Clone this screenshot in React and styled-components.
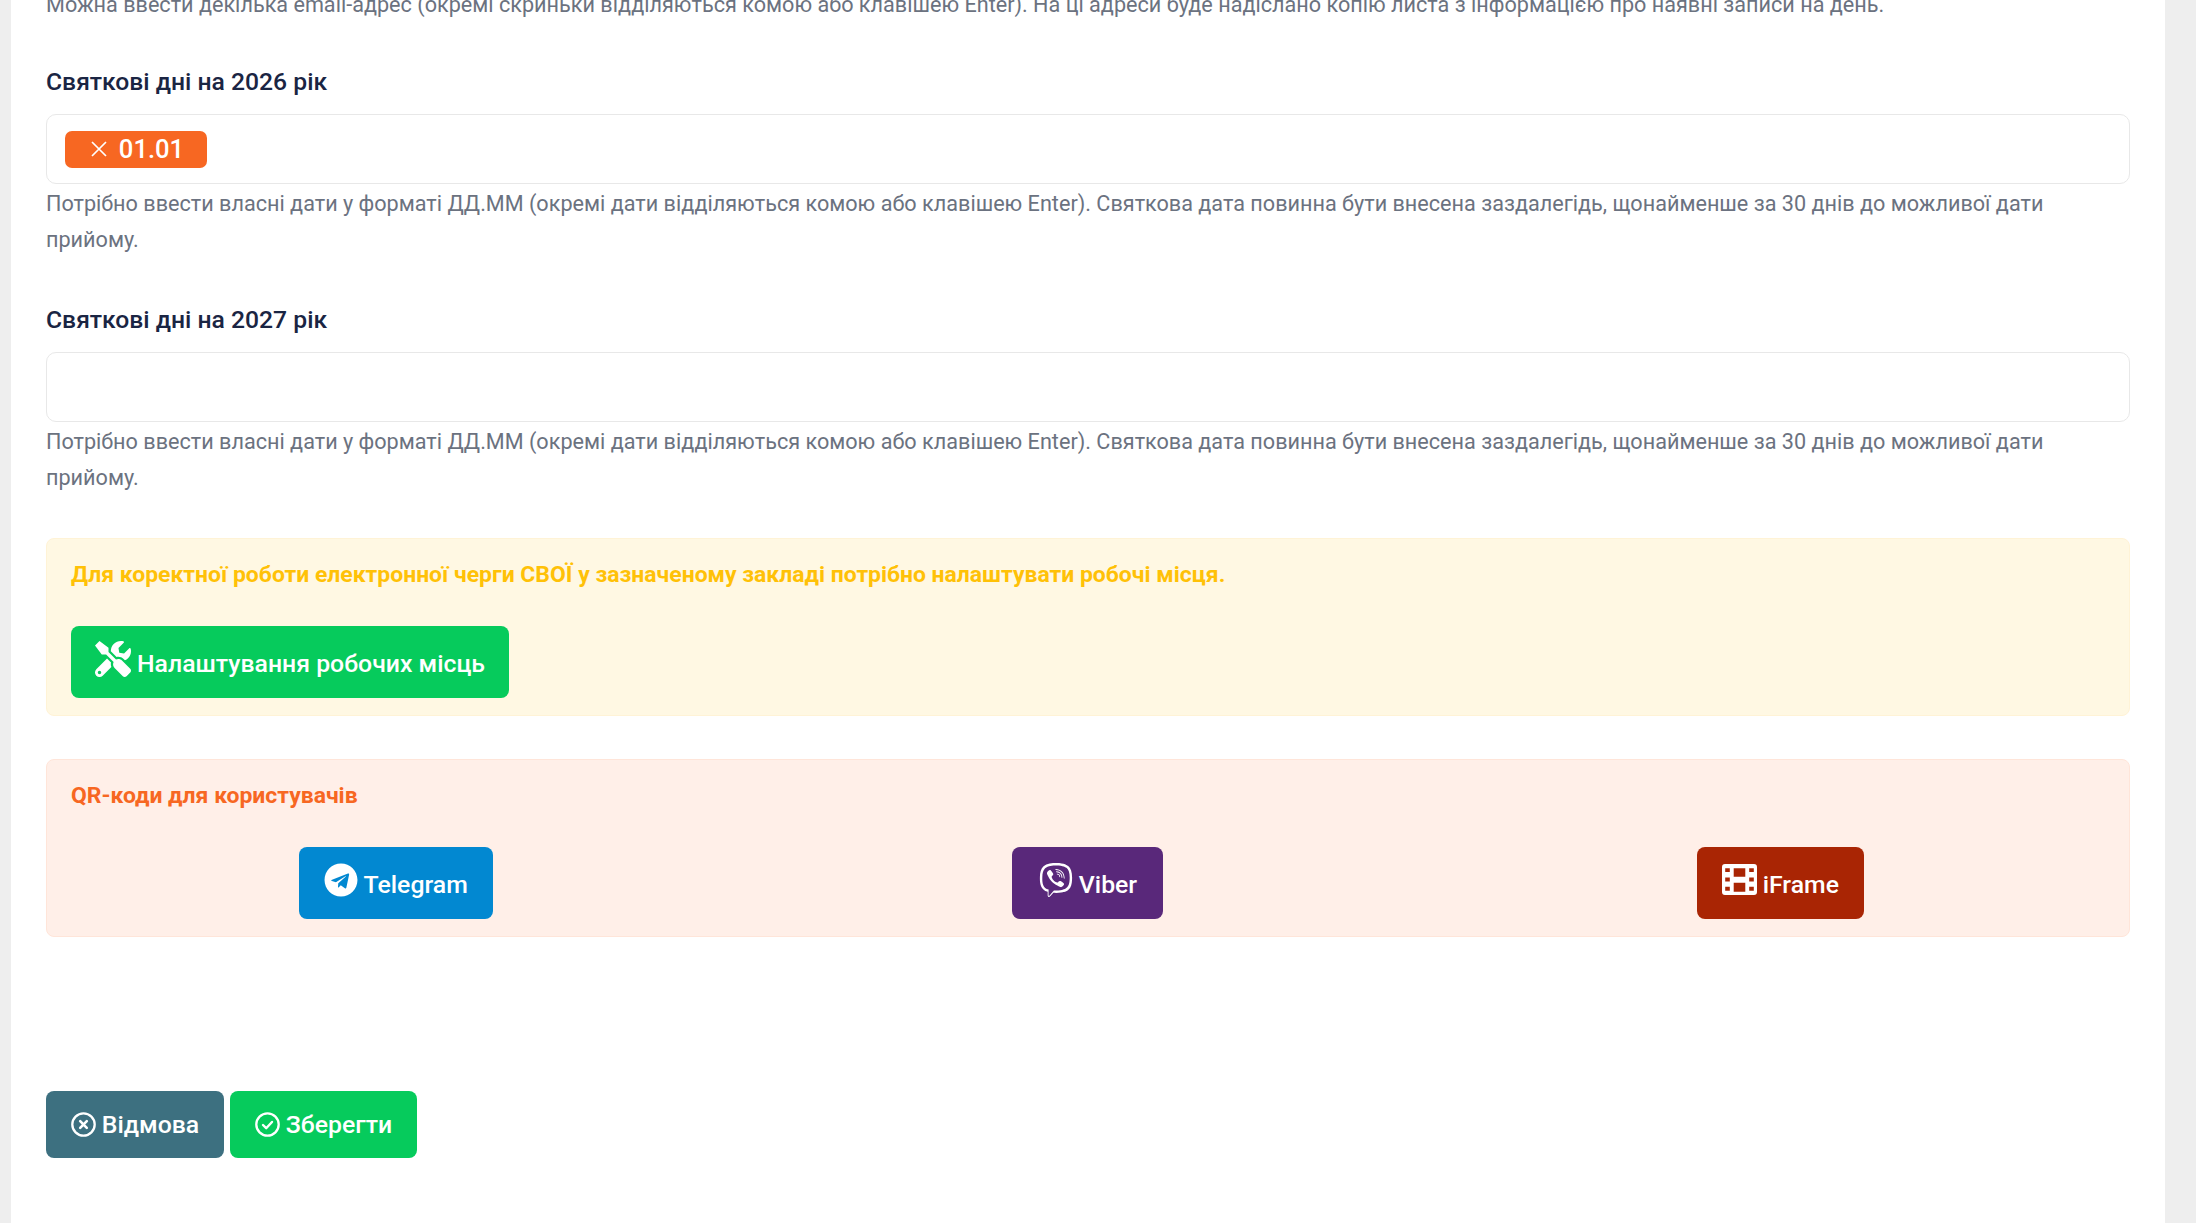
import React from "react";
import styled, { createGlobalStyle } from "styled-components";
import { FaTools, FaTelegram, FaViber } from "react-icons/fa";

const Global = createGlobalStyle`
  html, body { margin: 0; padding: 0; height: 1223px; overflow: hidden; background: #eeeeee; }
  body { font-family: Roboto, "Liberation Sans", sans-serif; }
  * { box-sizing: border-box; }
`;

const Panel = styled.main`
  margin: -13px 0 0 11px;
  width: 2154px;
  height: 1236px;
  background: #fff;
  padding: 0 35px;
  overflow: hidden;
`;

const Help = styled.p`
  margin: 0;
  font-size: 21.63px;
  line-height: 36.5px;
  color: #6b7280;
`;

const FieldHelp = styled(Help)`
  margin-top: 2px;
`;

const Field = styled.section`
  margin-top: ${(p) => p.$top}px;
`;

const Label = styled.h3`
  margin: 0 0 16px;
  font-size: 24.7px;
  line-height: 32px;
  font-weight: 500;
  color: #1a2543;
`;

const TagInput = styled.div`
  height: 70px;
  border: 1.5px solid #e8e8e8;
  border-radius: 10px;
  background: #fff;
  padding: 16px 18px;
  display: flex;
  align-items: flex-start;
`;

const Tag = styled.span`
  width: 142px;
  height: 37px;
  border-radius: 7px;
  background: #f76722;
  color: #fff;
  font-size: 25.6px;
  font-weight: 500;
  display: flex;
  align-items: center;
  justify-content: center;
  gap: 12px;
  padding-left: 3px;
`;

const Alert = styled.section`
  margin-top: ${(p) => p.$top}px;
  height: 178px;
  border-radius: 8px;
  padding: 21px 24px 0;
  border: 1.5px solid ${(p) => p.$border};
  background: ${(p) => p.$bg};
`;

const AlertTitle = styled.h4`
  margin: 0 0 ${(p) => p.$gap}px;
  font-size: 22.95px;
  line-height: 30px;
  font-weight: 700;
  color: ${(p) => p.$color};
`;

const Button = styled.button`
  height: ${(p) => p.$h || 72}px;
  width: ${(p) => p.$w}px;
  border: 0;
  border-radius: 8px;
  background: ${(p) => p.$bg};
  color: #fff;
  font-family: inherit;
  font-size: ${(p) => p.$fs || 24.8}px;
  font-weight: 500;
  display: inline-flex;
  align-items: center;
  justify-content: center;
  gap: ${(p) => p.$gap || 6}px;
  padding: 0;
  svg { display: block; flex: none; }
`;

const ButtonText = styled.span`
  display: block;
  padding-top: 3px;
`;

const QrRow = styled.div`
  margin: 0 -21.5px;
  display: grid;
  grid-template-columns: repeat(3, 1fr);
  justify-items: center;
`;

const Actions = styled.div`
  margin-top: 154px;
  display: flex;
  gap: 6px;
`;

const RaisedIcon = styled.span`
  display: block;
  line-height: 0;
  margin-top: -6px;
`;

const hint =
  "Потрібно ввести власні дати у форматі ДД.ММ (окремі дати відділяються комою або клавішею Enter). Святкова дата повинна бути внесена заздалегідь, щонайменше за 30 днів до можливої дати прийому.";

const CircleIcon = ({ children }) => (
  <svg width="25" height="25" viewBox="0 0 25 25" fill="none" stroke="#fff" strokeLinecap="round" strokeLinejoin="round">
    <circle cx="12.5" cy="12.5" r="11.2" strokeWidth="2.3" />
    {children}
  </svg>
);

const FilmIcon = () => (
  <svg width="35" height="31" viewBox="0 0 35 31" fill="#fff">
    <path
      fillRule="evenodd"
      d="M3 0h29a3 3 0 0 1 3 3v25a3 3 0 0 1-3 3H3a3 3 0 0 1-3-3V3a3 3 0 0 1 3-3zM3.2 4.2v3.8h4.6V4.2zM3.2 13.4v4h4.6v-4zM3.2 22.8v4h4.6v-4zM27.2 4.2v3.8h4.6V4.2zM27.2 13.4v4h4.6v-4zM27.2 22.8v4h4.6v-4zM11.7 4.3v8.4h11.6V4.3zM11.7 18.7v9h11.6v-9z"
    />
  </svg>
);

export default function App() {
  return (
    <Panel>
      <Global />
      <Help>
        Можна ввести декілька email-адрес (окремі скриньки відділяються комою або клавішею Enter). На ці адреси буде надіслано копію листа з інформацією про наявні записи на день.
      </Help>
      <Field $top={42}>
        <Label>Святкові дні на 2026 рік</Label>
        <TagInput>
          <Tag>
            <svg width="16" height="16" viewBox="0 0 16 16" fill="none" stroke="#fff" strokeWidth="1.7"><path d="M1 1l14 14M15 1L1 15" /></svg>
            01.01
          </Tag>
        </TagInput>
        <FieldHelp>{hint}</FieldHelp>
      </Field>
      <Field $top={45}>
        <Label>Святкові дні на 2027 рік</Label>
        <TagInput />
        <FieldHelp>{hint}</FieldHelp>
      </Field>
      <Alert $top={41} $bg="#fff8e3" $border="#fff3d6">
        <AlertTitle $color="#ffc107" $gap={36}>
          Для коректної роботи електронної черги СВОЇ у зазначеному закладі потрібно налаштувати робочі місця.
        </AlertTitle>
        <Button $bg="#06cb5c" $w={438}>
          <RaisedIcon><FaTools size={36} /></RaisedIcon>
          <ButtonText>Налаштування робочих місць</ButtonText>
        </Button>
      </Alert>
      <Alert $top={43} $bg="#ffefe8" $border="#ffe5d9">
        <AlertTitle $color="#f76722" $gap={36}>QR-коди для користувачів</AlertTitle>
        <QrRow>
          <Button $bg="#0288d1" $w={194}>
            <RaisedIcon><FaTelegram size={34} /></RaisedIcon>
            <ButtonText>Telegram</ButtonText>
          </Button>
          <Button $bg="#59287a" $w={151}>
            <RaisedIcon><FaViber size={34} /></RaisedIcon>
            <ButtonText>Viber</ButtonText>
          </Button>
          <Button $bg="#a92504" $w={167}>
            <RaisedIcon><FilmIcon /></RaisedIcon>
            <ButtonText>iFrame</ButtonText>
          </Button>
        </QrRow>
      </Alert>
      <Actions>
        <Button $bg="#3d7080" $w={178} $h={67} $gap={6}>
          <CircleIcon><path d="M9.2 9.2l6.6 6.6M15.8 9.2l-6.6 6.6" strokeWidth="2.6" /></CircleIcon>
          Відмова
        </Button>
        <Button $bg="#06cb5c" $w={187} $h={67} $gap={6}>
          <CircleIcon><path d="M8 13l3.2 3.2L17 10" strokeWidth="2.4" /></CircleIcon>
          Зберегти
        </Button>
      </Actions>
    </Panel>
  );
}
